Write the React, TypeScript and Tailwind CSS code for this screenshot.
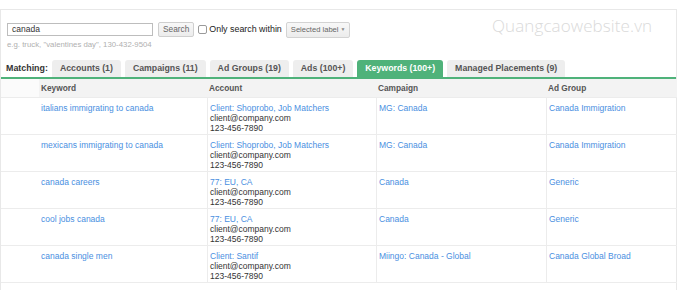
import React from "react";

const rows = [
  { kw: "italians immigrating to canada", acct: "Client: Shoprobo, Job Matchers", camp: "MG: Canada", ag: "Canada Immigration" },
  { kw: "mexicans immigrating to canada", acct: "Client: Shoprobo, Job Matchers", camp: "MG: Canada", ag: "Canada Immigration" },
  { kw: "canada careers", acct: "77: EU, CA", camp: "Canada", ag: "Generic" },
  { kw: "cool jobs canada", acct: "77: EU, CA", camp: "Canada", ag: "Generic" },
  { kw: "canada single men", acct: "Client: Santif", camp: "Miingo: Canada - Global", ag: "Canada Global Broad" },
];

const tabs = ["Accounts (1)", "Campaigns (11)", "Ad Groups (19)", "Ads (100+)", "Keywords (100+)", "Managed Placements (9)"];

export default function App() {
  return (
    <div className="w-[678px] h-[290px] bg-white pt-[9px] overflow-hidden" style={{ fontFamily: '"Liberation Sans", Arial, sans-serif' }}>
      <div className="relative w-[677px] h-[290px] border border-[#e8e8e8] bg-white">
        <div className="absolute left-[491px] top-[3px] text-[17px] font-light text-[#dadada] tracking-[0.1px]" style={{ fontFamily: '"Open Sans", sans-serif' }}>
          Quangcaowebsite.vn
        </div>
        <div className="pl-[6px] pt-[12px]">
          <div className="flex items-center h-[15px]">
            <div className="w-[146px] h-[13px] border border-[#bdbdbd] bg-white flex items-center pl-[4px] text-[8.5px] text-[#333]">canada</div>
            <div className="ml-[5px] h-[15px] px-[4px] border border-[#cfcfcf] rounded-[2px] bg-gradient-to-b from-[#f8f8f8] to-[#ececec] flex items-center text-[8.3px] text-[#666]">Search</div>
            <div className="ml-[4px] w-[9px] h-[9px] border border-[#9a9a9a] rounded-[2px] bg-white"></div>
            <div className="ml-[2px] text-[8.9px] text-[#222] whitespace-nowrap">Only search within</div>
            <div className="ml-[4px] h-[16px] w-[64px] px-[4px] border border-[#d3d3d3] rounded-[2px] bg-gradient-to-b from-[#f8f8f8] to-[#ececec] flex items-center justify-between text-[7.6px] text-[#666] whitespace-nowrap">
              <span>Selected label</span>
              <span className="text-[5px] text-[#888] ml-[2px]">▼</span>
            </div>
          </div>
          <div className="mt-[3px] text-[7.8px] text-[#b0b0b0] leading-[9px]">e.g. truck, "valentines day", 130-432-9504</div>
        </div>
        <div className="flex items-end mt-[10px] pl-[5px] h-[18px]">
          <div className="text-[8.9px] font-bold text-[#333] mr-[4px] h-[17px] flex items-center">Matching:</div>
          {tabs.map((t) => {
            const active = t === "Keywords (100+)";
            return (
              <div
                key={t}
                className={
                  "mr-[4px] h-[17px] px-[8px] rounded-t-[3px] flex items-center text-[8.75px] font-bold whitespace-nowrap " +
                  (active ? "bg-[#4fb27a] text-white" : "bg-[#eeeeee] text-[#555]")
                }
              >
                {t}
              </div>
            );
          })}
        </div>
        <div className="h-[2px] bg-[#4fb27a]"></div>
        <div className="grid grid-cols-[38px_168px_169px_170px_131px] text-[8.5px] leading-[10px]">
          <div className="h-[19px] bg-[#fbfbfb] border-b border-[#ececec]"></div>
          {["Keyword", "Account", "Campaign", "Ad Group"].map((h) => (
            <div key={h} className="h-[19px] bg-[#f3f3f3] border-b border-[#ececec] pl-[2px] flex items-center font-bold text-[#555] text-[8.3px]">
              {h}
            </div>
          ))}
          {rows.map((r, i) => (
            <React.Fragment key={i}>
              <div className="h-[37px] border-b border-[#ececec]"></div>
              <div className="h-[37px] border-b border-[#ececec] pl-[2px] pt-[5px] text-[#4a8fdf]">{r.kw}</div>
              <div className="h-[37px] border-b border-l border-[#ececec] pl-[2px] pt-[5px]">
                <div className="text-[#4a8fdf]">{r.acct}</div>
                <div className="text-[#333]">client@company.com</div>
                <div className="text-[#333]">123-456-7890</div>
              </div>
              <div className="h-[37px] border-b border-l border-[#ececec] pl-[2px] pt-[5px] text-[#4a8fdf]">{r.camp}</div>
              <div className="h-[37px] border-b border-l border-[#ececec] pl-[2px] pt-[5px] text-[#4a8fdf]">{r.ag}</div>
            </React.Fragment>
          ))}
        </div>
      </div>
    </div>
  );
}
